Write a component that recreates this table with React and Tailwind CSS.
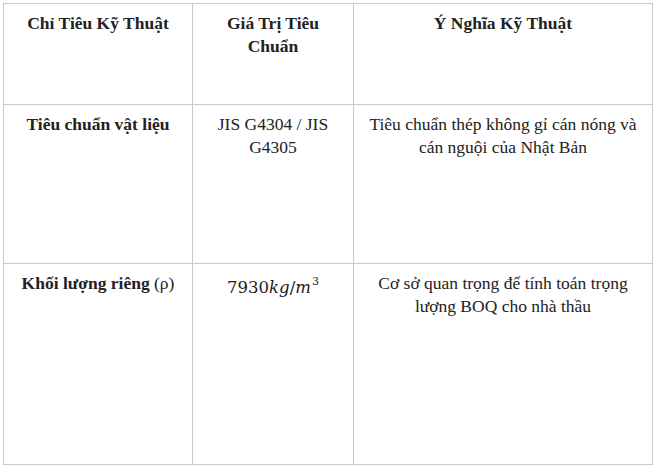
import React from 'react';

const rows = [
  {
    h: 'h-[159px]',
    name: 'Tiêu chuẩn vật liệu',
    value: 'JIS G4304 / JIS G4305',
    note: 'Tiêu chuẩn thép không gỉ cán nóng và cán nguội của Nhật Bản',
  },
  {
    h: 'h-[201px]',
    name: (
      <>
        Khối lượng riêng <span className="font-normal">(ρ)</span>
      </>
    ),
    math: true,
    note: 'Cơ sở quan trọng để tính toán trọng lượng BOQ cho nhà thầu',
  },
];

const cell = 'border border-[#c9c9c9] align-top text-center px-3 pt-[8px]';

const App = () => {
  return (
    <div className="bg-white min-h-screen pl-[3px] pt-[3px] font-['Liberation_Serif',serif] text-[17.5px] leading-[23px] text-[#222]">
      <table className="w-[649px] table-fixed border-collapse">
        <colgroup>
          <col className="w-[189px]" />
          <col className="w-[161px]" />
          <col className="w-[299px]" />
        </colgroup>
        <tbody>
          {/* tiêu đề */}
          <tr className="h-[101px]">
            <th className={`${cell} font-bold`}>Chỉ Tiêu Kỹ Thuật</th>
            <th className={`${cell} font-bold`}>Giá Trị Tiêu Chuẩn</th>
            <th className={`${cell} font-bold`}>Ý Nghĩa Kỹ Thuật</th>
          </tr>
          {rows.map((r, i) => (
            <tr key={i} className={r.h}>
              <td className={`${cell} font-bold`}>{r.name}</td>
              <td className={cell}>
                {r.math ? (
                  <span className="inline-block pt-[6px] font-['DejaVu_Serif',serif] text-[16.5px] leading-[20px] text-[#222]">
                    7930<i>kg</i>/<i>m</i>
                    <span className="text-[11px] relative top-[-8px] ml-[1px]">3</span>
                  </span>
                ) : (
                  r.value
                )}
              </td>
              <td className={cell}>{r.note}</td>
            </tr>
          ))}
        </tbody>
      </table>
    </div>
  );
};

export default App;
